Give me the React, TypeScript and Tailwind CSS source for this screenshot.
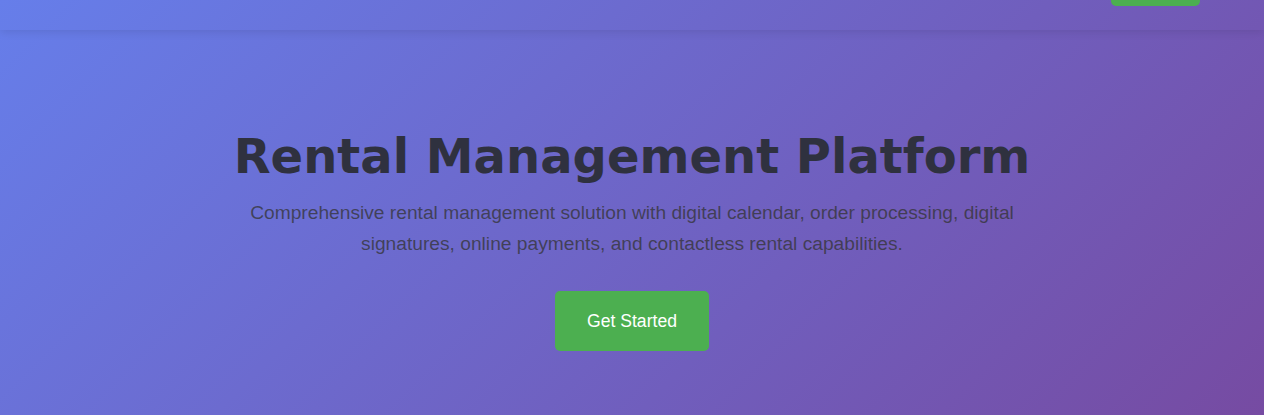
import React from "react";

export default function App() {
  return (
    <div className="min-h-[415px] h-[415px] overflow-hidden bg-[linear-gradient(135deg,#667eea_0%,#764ba2_100%)] font-['Liberation_Sans',Arial,sans-serif]">
      <header className="h-[30px] flex justify-end items-start pr-[64px] shadow-[0_2px_10px_rgba(0,0,0,0.1)] relative z-10 overflow-hidden">
        <button aria-label="Login" className="w-[89px] h-[36px] -mt-[30px] bg-[#4CAF50] rounded-[5px]"></button>
      </header>
      <section className="flex flex-col items-center text-center pt-[98px] px-4">
        <h1 className="font-['DejaVu_Sans',sans-serif] font-bold text-[48px] leading-[56px] text-[#2f313f]">
          Rental Management Platform
        </h1>
        <p className="mt-[14px] max-w-[800px] text-[19.2px] leading-[30.7px] text-[#333]/75">
          Comprehensive rental management solution with digital calendar, order processing, digital signatures, online payments, and contactless rental capabilities.
        </p>
        <button className="mt-[32px] w-[154px] h-[60px] bg-[#4CAF50] rounded-[5px] text-white text-[17.6px]">
          Get Started
        </button>
      </section>
    </div>
  );
}
